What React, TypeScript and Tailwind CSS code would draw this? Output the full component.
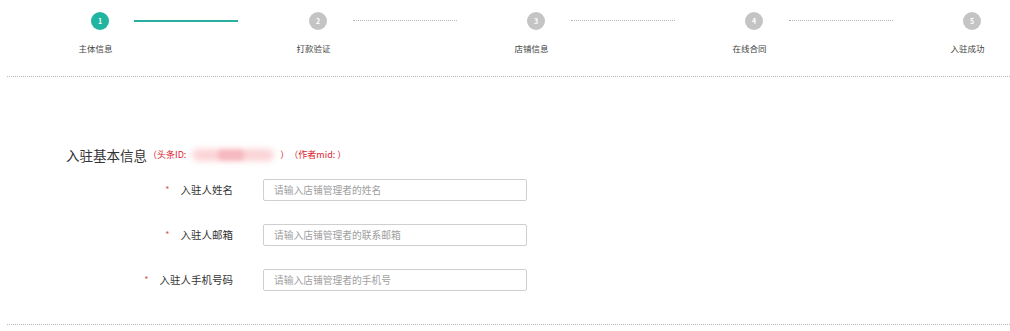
import React from "react";

const steps = ["主体信息", "打款验证", "店铺信息", "在线合同", "入驻成功"];

const rows = [
  { label: "入驻人姓名", ph: "请输入店铺管理者的姓名" },
  { label: "入驻人邮箱", ph: "请输入店铺管理者的联系邮箱" },
  { label: "入驻人手机号码", ph: "请输入店铺管理者的手机号" },
];

export default function App() {
  return (
    <div className="w-[1010px] h-[331px] bg-white overflow-hidden text-[#333]" style={{ fontFamily: '"Noto Sans CJK SC", "Noto Sans", sans-serif' }}>
      {/* steps */}
      <div className="flex items-start pt-[12px] pl-[91px] pr-[29px]">
        {steps.map((s, i) => (
          <React.Fragment key={s}>
            <div className="flex flex-col items-center w-[18px] shrink-0">
              <div
                className={
                  i === 0
                    ? "w-[18px] h-[18px] rounded-full bg-[#1fb5a1] text-white text-[7px] leading-[18px] text-center font-bold"
                    : "w-[18px] h-[18px] rounded-full bg-[#c4c4c4] text-white text-[7px] leading-[18px] text-center font-bold"
                }
              >
                {i + 1}
              </div>
              <div className="mt-[12px] whitespace-nowrap pr-[9px] text-[8.5px] leading-[12px] text-[#444]">{s}</div>
            </div>
            {i < steps.length - 1 && (
              <div className="flex-1">
                {i === 0 ? (
                  <div className="mt-[8px] ml-[25px] w-[104px] h-[1.5px] bg-[#2aaea0]" />
                ) : (
                  <div className="mt-[8px] ml-[26px] w-[104px] border-t border-dotted border-[#b5b5b5]" />
                )}
              </div>
            )}
          </React.Fragment>
        ))}
      </div>

      <div className="mt-[22px] ml-[7px] border-t border-dotted border-[#b8b8b8]" />

      {/* heading */}
      <div className="mt-[68px] pl-[66px] flex items-center h-[20px]">
        <span className="text-[13.5px] text-[#333]">入驻基本信息</span>
        <span className="ml-[1px] text-[9px] text-[#d9232d] flex items-center [text-spacing-trim:space-all]">
          <span>（头条ID:</span>
          <span className="relative w-[90px] h-[14px] mx-[2px]">
            <span className="absolute left-[4px] top-[1px] w-[82px] h-[12px] rounded-full bg-[#fbd3d6] blur-[3px]" />
            <span className="absolute left-[30px] top-[2px] w-[26px] h-[10px] rounded bg-[#f5b8bf] blur-[2px]" />
          </span>
          <span>）（作者mid: ）</span>
        </span>
      </div>

      {/* form rows */}
      <div className="mt-[14px] pl-[66px] flex flex-col gap-[23px]">
        {rows.map((r) => (
          <div key={r.label} className="flex items-center h-[22px]">
            <div className="w-[167px] flex justify-end items-center">
              <span className="text-[#d05a5a] text-[9px] mr-[11px]">*</span>
              <span className="text-[10.5px] text-[#333]">{r.label}</span>
            </div>
            <div className="ml-[30px] w-[264px] h-[22px] border border-[#cfcfcf] rounded-[2px] flex items-center pl-[10px]">
              <span className="text-[9.75px] text-[#a0a0a0]">{r.ph}</span>
            </div>
          </div>
        ))}
      </div>

      <div className="mt-[33px] ml-[7px] border-t border-dotted border-[#b8b8b8]" />
    </div>
  );
}
